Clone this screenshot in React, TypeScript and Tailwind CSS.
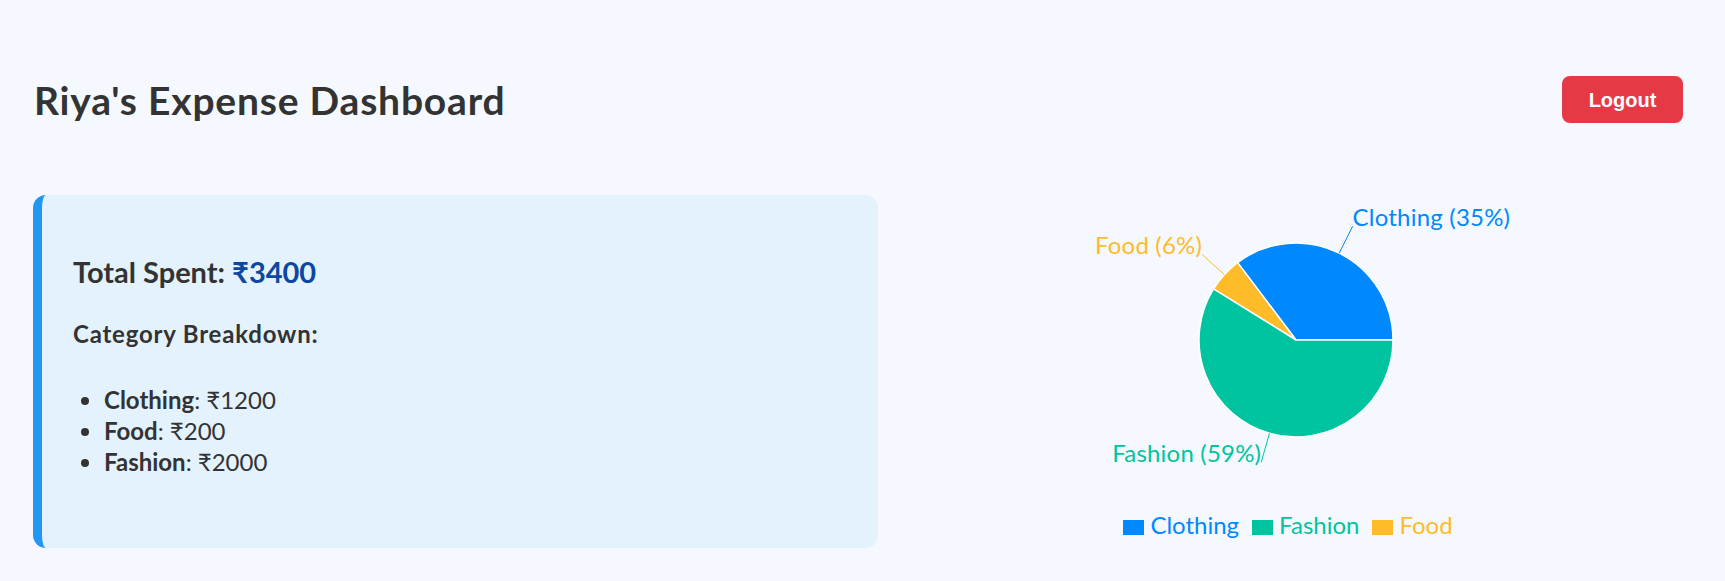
import React from 'react'

type Slice = { name: string; value: number; color: string }

const expenses: Slice[] = [
    { name: 'Clothing', value: 1200, color: '#0088FE' },
    { name: 'Food', value: 200, color: '#FFBB28' },
    { name: 'Fashion', value: 2000, color: '#00C49F' },
]

const legendOrder = ['Clothing', 'Fashion', 'Food']

const CX = 373
const CY = 145
const R = 97
const LABEL_OFFSET = 30

function polar(r: number, deg: number) {
    const rad = (deg * Math.PI) / 180
    return { x: CX + r * Math.cos(rad), y: CY - r * Math.sin(rad) }
}

function ExpensePie() {
    const total = expenses.reduce((sum, e) => sum + e.value, 0)
    let angle = 0

    const slices = expenses.map((e) => {
        const start = angle
        const sweep = (e.value / total) * 360
        angle += sweep
        const end = angle
        const p0 = polar(R, start)
        const p1 = polar(R, end)
        const mid = start + sweep / 2
        const l0 = polar(R, mid)
        const l1 = polar(R + LABEL_OFFSET, mid)
        const large = sweep > 180 ? 1 : 0
        const d = `M${CX},${CY} L${p0.x},${p0.y} A${R},${R} 0 ${large} 0 ${p1.x},${p1.y} Z`
        const pct = Math.round((e.value / total) * 100)
        return { ...e, d, l0, l1, pct }
    })

    return (
        <svg width={730} height={318} className="block">
            {slices.map((s) => (
                <path key={s.name} d={s.d} fill={s.color} stroke="#fff" strokeWidth={1.5} />
            ))}
            {slices.map((s) => (
                <g key={`${s.name}-label`}>
                    <path d={`M${s.l0.x},${s.l0.y} L${s.l1.x},${s.l1.y}`} stroke={s.color} strokeWidth={1} fill="none" />
                    <text
                        x={s.l1.x}
                        y={s.l1.y}
                        fill={s.color}
                        fontSize={24}
                        letterSpacing={0.2}
                        textAnchor={s.l1.x > CX ? 'start' : 'end'}
                        fontFamily="Lato, sans-serif"
                    >
                        {s.name} ({s.pct}%)
                    </text>
                </g>
            ))}
        </svg>
    )
}

function Legend() {
    return (
        <div className="flex h-[23px] items-center justify-center gap-[13px]">
            {legendOrder.map((name) => {
                const item = expenses.find((e) => e.name === name)!
                return (
                    <div key={name} className="flex items-center gap-[6px]">
                        <span className="mt-[6px] block h-[15px] w-[21px]" style={{ backgroundColor: item.color }} />
                        <span className="text-[24px] leading-[23px]" style={{ color: item.color }}>
                            {name}
                        </span>
                    </div>
                )
            })}
        </div>
    )
}

export default function App() {
    return (
        <div className="min-h-screen bg-[#f5f9ff] pl-[33px] pr-[42px] pt-[76px] font-['Lato',sans-serif] text-[#333]">
            <header className="flex h-[47px] items-center justify-between">
                <h1 className="pl-[1px] text-[39px] font-bold leading-[38px] tracking-[0.8px]">Riya's Expense Dashboard</h1>
                <button className="flex h-[47px] w-[121px] items-center justify-center rounded-[8px] bg-[#e63946] font-['Liberation_Sans',Arial,sans-serif] text-[20px] font-bold text-white">
                    Logout
                </button>
            </header>

            <main className="mt-[72px] flex items-start">
                <section className="h-[353px] w-[845px] rounded-[13px] border-l-[9px] border-[#2196f3] bg-[#e3f2fd] pl-[31px] pt-[59px]">
                    <h2 className="text-[29px] font-bold leading-[36px]">
                        Total Spent: <span className="text-[#0d47a1]">₹3400</span>
                    </h2>
                    <h3 className="mt-[29px] text-[24px] font-bold leading-[30px] tracking-[0.8px]">Category Breakdown:</h3>
                    <ul className="mt-[35px] list-disc pl-[31px] text-[24px] leading-[31px]">
                        <li>
                            <strong>Clothing</strong>: ₹1200
                        </li>
                        <li>
                            <strong>Food</strong>: ₹200
                        </li>
                        <li>
                            <strong>Fashion</strong>: ₹2000
                        </li>
                    </ul>
                </section>

                <div className="ml-[45px] w-[730px]">
                    <ExpensePie />
                    <Legend />
                </div>
            </main>
        </div>
    )
}
